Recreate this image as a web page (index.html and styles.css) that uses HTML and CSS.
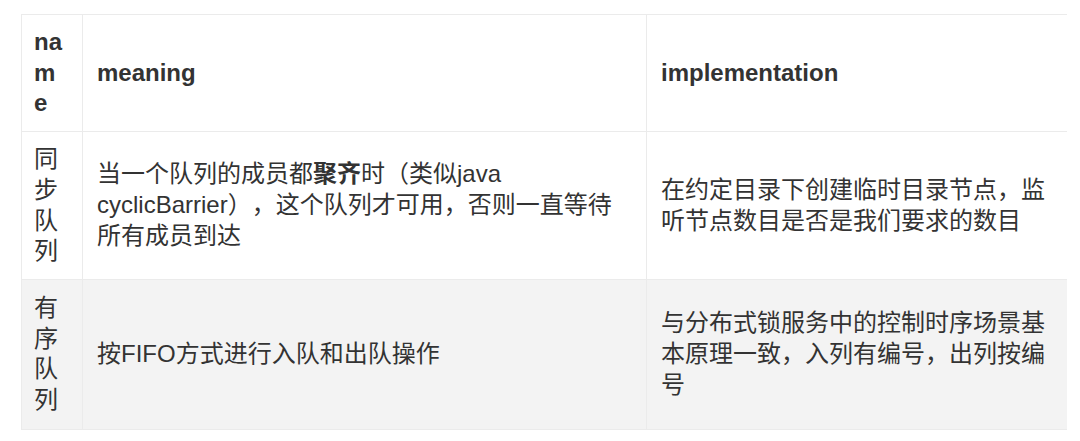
FILE: index.html
```html
<!DOCTYPE html>
<html lang="zh-CN">
<head>
<meta charset="utf-8">
<title>队列</title>
<link rel="stylesheet" href="styles.css">
</head>
<body>
<table class="grid">
  <colgroup>
    <col class="c-name">
    <col class="c-meaning">
    <col class="c-impl">
  </colgroup>
  <thead>
    <tr>
      <th class="name">name</th>
      <th>meaning</th>
      <th>implementation</th>
    </tr>
  </thead>
  <tbody>
    <tr>
      <td class="name">同步队列</td>
      <td>当一个队列的成员都<strong>聚齐</strong>时（类似java cyclicBarrier），这个队列才可用，否则一直等待所有成员到达</td>
      <td>在约定目录下创建临时目录节点，监听节点数目是否是我们要求的数目</td>
    </tr>
    <tr class="alt">
      <td class="name">有序队列</td>
      <td>按FIFO方式进行入队和出队操作</td>
      <td>与分布式锁服务中的控制时序场景基本原理一致，入列有编号，出列按编号</td>
    </tr>
  </tbody>
</table>
</body>
</html>
```

FILE: styles.css
```css
html, body {
  background: #ffffff;
}
body {
  margin: 14px 13px 0 21px;
  font-family: "Liberation Sans", "Noto Sans CJK SC", sans-serif;
  color: #333333;
}
.grid {
  width: 1046px;
  table-layout: fixed;
  border-collapse: collapse;
  font-size: 24px;
  line-height: 30.7px;
  text-spacing-trim: space-all;
}
.c-name { width: 61px; }
.c-meaning { width: 564px; }
.c-impl { width: 421px; }
.grid th,
.grid td {
  border: 1px solid #ebebeb;
  padding: 12px 13px 12px 14px;
  vertical-align: middle;
  text-align: left;
}
.grid th {
  font-weight: 700;
  color: #333333;
}
.grid td {
  font-weight: 400;
}
.grid .name {
  padding-left: 12px;
  padding-right: 16px;
  word-break: break-all;
}
.grid strong {
  font-weight: 700;
}
.grid tr.alt td {
  background: #f3f3f3;
  padding-top: 13px;
  padding-bottom: 13px;
}
```
